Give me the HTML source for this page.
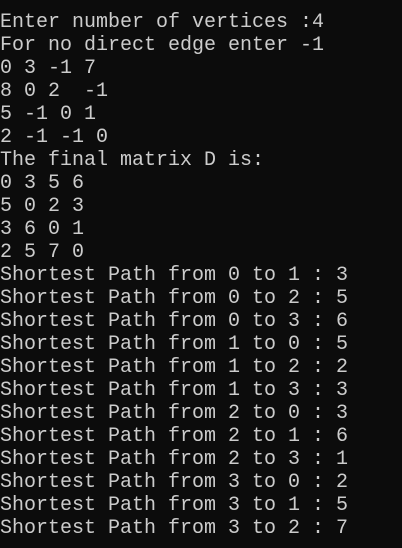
<!DOCTYPE html>
<html><head><style>
html,body{margin:0;padding:0;background:#0c0c0c;width:402px;height:548px;overflow:hidden}
pre{margin:0;padding:11px 0 0 0;font-family:"Liberation Mono",monospace;font-size:20px;line-height:23px;color:#cccccc;white-space:pre}
</style></head><body><pre>Enter number of vertices :4
For no direct edge enter -1
0 3 -1 7
8 0 2  -1
5 -1 0 1
2 -1 -1 0
The final matrix D is:
0 3 5 6
5 0 2 3
3 6 0 1
2 5 7 0
Shortest Path from 0 to 1 : 3
Shortest Path from 0 to 2 : 5
Shortest Path from 0 to 3 : 6
Shortest Path from 1 to 0 : 5
Shortest Path from 1 to 2 : 2
Shortest Path from 1 to 3 : 3
Shortest Path from 2 to 0 : 3
Shortest Path from 2 to 1 : 6
Shortest Path from 2 to 3 : 1
Shortest Path from 3 to 0 : 2
Shortest Path from 3 to 1 : 5
Shortest Path from 3 to 2 : 7</pre></body></html>
